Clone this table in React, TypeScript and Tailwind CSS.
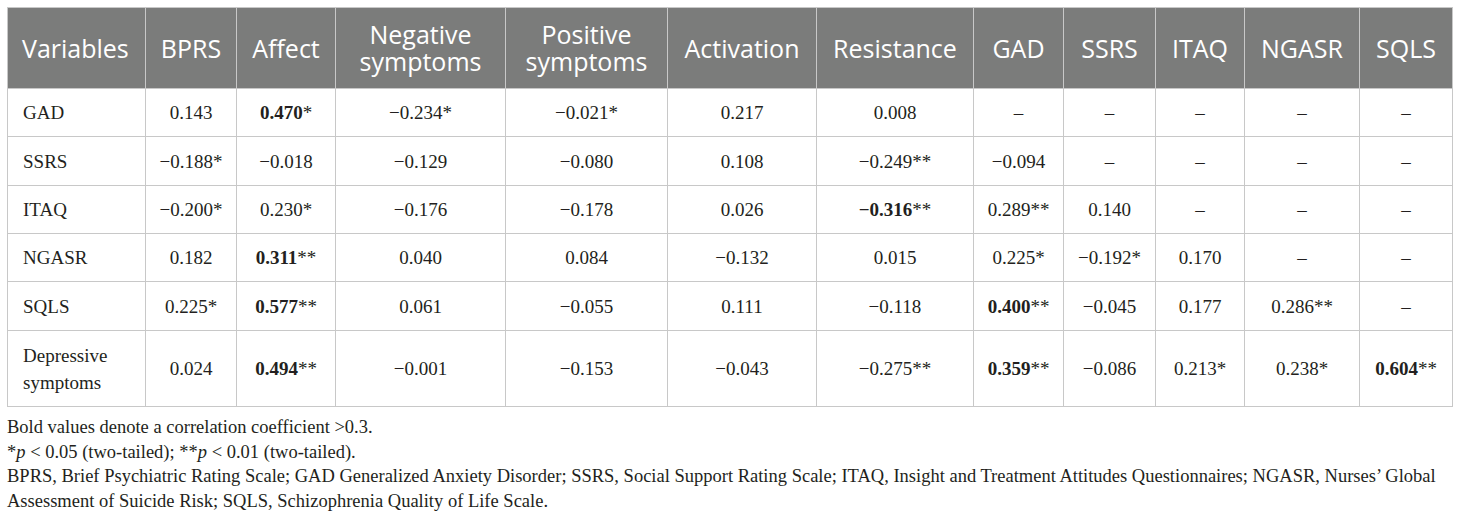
import React from "react";

type Cell = { v: string; b?: boolean; s?: string };

const columns = [
    { label: ["Variables"], w: "w-[138px]" },
    { label: ["BPRS"], w: "w-[91px]" },
    { label: ["Affect"], w: "w-[99px]" },
    { label: ["Negative", "symptoms"], w: "w-[170px]" },
    { label: ["Positive", "symptoms"], w: "w-[162px]" },
    { label: ["Activation"], w: "w-[149px]" },
    { label: ["Resistance"], w: "w-[157px]" },
    { label: ["GAD"], w: "w-[90px]" },
    { label: ["SSRS"], w: "w-[92px]" },
    { label: ["ITAQ"], w: "w-[89px]" },
    { label: ["NGASR"], w: "w-[115px]" },
    { label: ["SQLS"], w: "w-[93px]" },
];

const d: Cell = { v: "\u2013" };

const rows: { name: string[]; h: string; cells: Cell[] }[] = [
    {
        name: ["GAD"],
        h: "h-[48px]",
        cells: [
            { v: "0.143" },
            { v: "0.470", b: true, s: "*" },
            { v: "\u22120.234", s: "*" },
            { v: "\u22120.021", s: "*" },
            { v: "0.217" },
            { v: "0.008" },
            d, d, d, d, d,
        ],
    },
    {
        name: ["SSRS"],
        h: "h-[49px]",
        cells: [
            { v: "\u22120.188", s: "*" },
            { v: "\u22120.018" },
            { v: "\u22120.129" },
            { v: "\u22120.080" },
            { v: "0.108" },
            { v: "\u22120.249", s: "**" },
            { v: "\u22120.094" },
            d, d, d, d,
        ],
    },
    {
        name: ["ITAQ"],
        h: "h-[48px]",
        cells: [
            { v: "\u22120.200", s: "*" },
            { v: "0.230", s: "*" },
            { v: "\u22120.176" },
            { v: "\u22120.178" },
            { v: "0.026" },
            { v: "\u22120.316", b: true, s: "**" },
            { v: "0.289", s: "**" },
            { v: "0.140" },
            d, d, d,
        ],
    },
    {
        name: ["NGASR"],
        h: "h-[48px]",
        cells: [
            { v: "0.182" },
            { v: "0.311", b: true, s: "**" },
            { v: "0.040" },
            { v: "0.084" },
            { v: "\u22120.132" },
            { v: "0.015" },
            { v: "0.225", s: "*" },
            { v: "\u22120.192", s: "*" },
            { v: "0.170" },
            d, d,
        ],
    },
    {
        name: ["SQLS"],
        h: "h-[49px]",
        cells: [
            { v: "0.225", s: "*" },
            { v: "0.577", b: true, s: "**" },
            { v: "0.061" },
            { v: "\u22120.055" },
            { v: "0.111" },
            { v: "\u22120.118" },
            { v: "0.400", b: true, s: "**" },
            { v: "\u22120.045" },
            { v: "0.177" },
            { v: "0.286", s: "**" },
            d,
        ],
    },
    {
        name: ["Depressive", "symptoms"],
        h: "h-[76px]",
        cells: [
            { v: "0.024" },
            { v: "0.494", b: true, s: "**" },
            { v: "\u22120.001" },
            { v: "\u22120.153" },
            { v: "\u22120.043" },
            { v: "\u22120.275", s: "**" },
            { v: "0.359", b: true, s: "**" },
            { v: "\u22120.086" },
            { v: "0.213", s: "*" },
            { v: "0.238", s: "*" },
            { v: "0.604", b: true, s: "**" },
        ],
    },
];

export default function App() {
    return (
        <div className="min-h-screen bg-white px-[7px] pt-[7px] text-[#231f20]">
            <table className="w-[1445px] table-fixed border-collapse">
                <colgroup>
                    {columns.map((c, i) => (
                        <col key={i} className={c.w} />
                    ))}
                </colgroup>
                <thead>
                    <tr className="h-[81px] bg-[#7b7c7b]">
                        {columns.map((c, i) => (
                            <th
                                key={i}
                                className={`border border-[#c8c8c8] font-['Open_Sans',sans-serif] text-[25px] font-normal leading-[27px] text-white ${i === 0 ? "pl-[14px] text-left" : "text-center"}`}
                            >
                                {c.label.map((l, j) => (
                                    <div key={j}>{l}</div>
                                ))}
                            </th>
                        ))}
                    </tr>
                </thead>
                <tbody className="font-['Liberation_Serif',serif] text-[19px] leading-[27px]">
                    {rows.map((r, i) => (
                        <tr key={i} className={r.h}>
                            <td className="border border-[#c8c8c8] pl-[15px] text-left">
                                {r.name.map((n, j) => (
                                    <div key={j}>{n}</div>
                                ))}
                            </td>
                            {r.cells.map((c, j) => (
                                <td key={j} className="border border-[#c8c8c8] text-center">
                                    {c.b ? <b>{c.v}</b> : c.v}
                                    {c.s}
                                </td>
                            ))}
                        </tr>
                    ))}
                </tbody>
            </table>
            {/* Footnotes */}
            <div className="mt-[8px] w-[1445px] font-['Liberation_Serif',serif] text-[18.5px] leading-[24.7px]">
                <p>Bold values denote a correlation coefficient &gt;0.3.</p>
                <p>
                    *<i>p</i> &lt; 0.05 (two-tailed); **<i>p</i> &lt; 0.01 (two-tailed).
                </p>
                <p>
                    BPRS, Brief Psychiatric Rating Scale; GAD Generalized Anxiety Disorder; SSRS, Social Support Rating Scale; ITAQ, Insight and Treatment Attitudes Questionnaires; NGASR, Nurses&rsquo; Global Assessment of Suicide Risk; SQLS, Schizophrenia Quality of Life Scale.
                </p>
            </div>
        </div>
    );
}
